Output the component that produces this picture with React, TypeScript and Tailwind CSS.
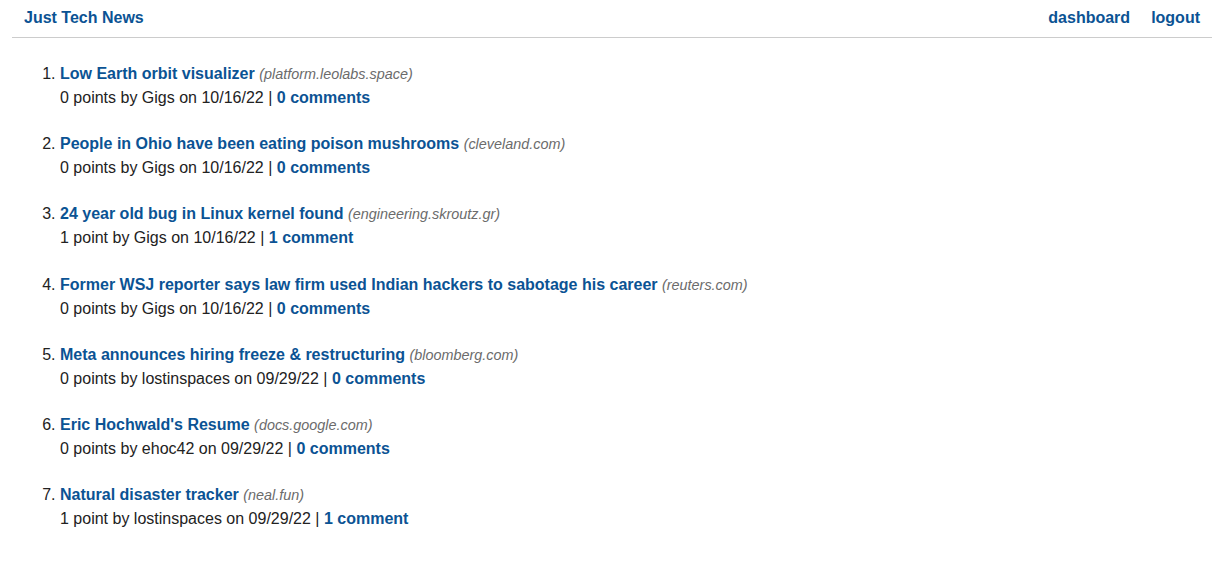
const stories = [
  { title: "Low Earth orbit visualizer", domain: "platform.leolabs.space", points: 0, user: "Gigs", date: "10/16/22", comments: 0 },
  { title: "People in Ohio have been eating poison mushrooms", domain: "cleveland.com", points: 0, user: "Gigs", date: "10/16/22", comments: 0 },
  { title: "24 year old bug in Linux kernel found", domain: "engineering.skroutz.gr", points: 1, user: "Gigs", date: "10/16/22", comments: 1 },
  { title: "Former WSJ reporter says law firm used Indian hackers to sabotage his career", domain: "reuters.com", points: 0, user: "Gigs", date: "10/16/22", comments: 0 },
  { title: "Meta announces hiring freeze & restructuring", domain: "bloomberg.com", points: 0, user: "lostinspaces", date: "09/29/22", comments: 0 },
  { title: "Eric Hochwald's Resume", domain: "docs.google.com", points: 0, user: "ehoc42", date: "09/29/22", comments: 0 },
  { title: "Natural disaster tracker", domain: "neal.fun", points: 1, user: "lostinspaces", date: "09/29/22", comments: 1 },
];

export default function App() {
  return (
    <div className="min-h-screen bg-white text-[16px] leading-6 text-[#222] [font-family:'Liberation_Sans',Arial,sans-serif]">
      {/* Header */}
      <header className="ml-3 mr-[7px] flex items-center justify-between border-b border-[#cccccc] px-3 pt-[6px] pb-[7px]">
        <a href="#" className="font-bold text-[#0b5394]">Just Tech News</a>
        <nav className="flex gap-[21px] font-bold text-[#0b5394]">
          <a href="#">dashboard</a>
          <a href="#">logout</a>
        </nav>
      </header>

      {/* Story list */}
      <ol className="mx-3 mt-[24px] list-decimal pl-[48px]">
        {stories.map((s) => (
          <li key={s.title} className="mb-[22.2px]">
            <div>
              <a href="#" className="font-bold text-[#0b5394]">{s.title}</a>{" "}
              <span className="text-[14.4px] italic text-[#6b6b6b]">({s.domain})</span>
            </div>
            <div>
              {s.points} {s.points === 1 ? "point" : "points"} by {s.user} on {s.date} |{" "}
              <a href="#" className="font-bold text-[#0b5394]">
                {s.comments} {s.comments === 1 ? "comment" : "comments"}
              </a>
            </div>
          </li>
        ))}
      </ol>
    </div>
  );
}
